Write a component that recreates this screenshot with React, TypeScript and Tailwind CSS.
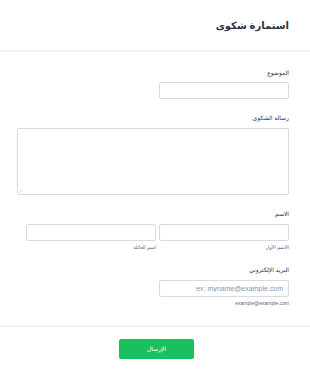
import React from "react";

export default function App() {
  const font = "font-['Liberation_Sans','DejaVu_Sans',sans-serif]";
  return (
    <div dir="rtl" className={`w-[310px] h-[375px] bg-white overflow-hidden ${font} text-[#2c3345]`}>
      <div className="h-[50px] flex items-center pr-[21px] border-b-2 border-[#f3f3f5] box-content">
        <h1 className="text-[10px] font-bold leading-none mt-[2px]">استمارة شكوى</h1>
      </div>
      <div className="pr-[21px] pl-[17px] pt-[17px]">
        <label className="block text-[6px] leading-[8px] h-[8px]">الموضوع</label>
        <input className="block mt-[5px] w-[130px] h-[17px] border border-[#d8dbe2] rounded-[2px] bg-white" />

        <label className="block mt-[15px] text-[6px] leading-[8px] h-[8px]">رسالة الشكوى</label>
        <div className="relative mt-[6px] w-[272px] h-[67px] border border-[#d8dbe2] rounded-[2px] bg-white">
          <svg className="absolute left-[1px] bottom-[1px]" width="4" height="4" viewBox="0 0 4 4">
            <path d="M0.5 3.5 L3.5 0.5" stroke="#b0b4bd" strokeWidth="0.6" />
          </svg>
        </div>

        <label className="block mt-[15px] text-[6px] leading-[8px] h-[8px]">الاسم</label>
        <div className="flex gap-[3px] mt-[6px]">
          <div className="flex flex-col w-[130px]">
            <input className="block w-[130px] h-[17px] border border-[#d8dbe2] rounded-[2px] bg-white" />
            <span className="mt-[3px] text-[5px] leading-[7px] text-[#57647e]">الاسم الأول</span>
          </div>
          <div className="flex flex-col w-[130px]">
            <input className="block w-[130px] h-[17px] border border-[#d8dbe2] rounded-[2px] bg-white" />
            <span className="mt-[3px] text-[5px] leading-[7px] text-[#57647e]">اسم العائلة</span>
          </div>
        </div>

        <label className="block mt-[15px] text-[6px] leading-[8px] h-[8px]">البريد الإلكتروني</label>
        <input
          dir="ltr"
          placeholder="ex: myname@example.com"
          className="block mt-[6px] w-[130px] h-[17px] border border-[#d8dbe2] rounded-[2px] bg-white text-right pr-[5px] text-[7px] placeholder:text-[#8894ab] font-['Liberation_Sans',sans-serif]"
        />
        <div className="mt-[3px] text-[5px] leading-[7px] text-[#57647e]">example@example.com</div>
      </div>
      <div className="mt-[18px] border-t-2 border-[#f3f3f5]" />
      <div className="flex justify-center pt-[12px] pl-[3px]">
        <button className="w-[75px] h-[20px] rounded-[2px] bg-[#1bbf5f] text-white text-[6px]">الإرسال</button>
      </div>
    </div>
  );
}
